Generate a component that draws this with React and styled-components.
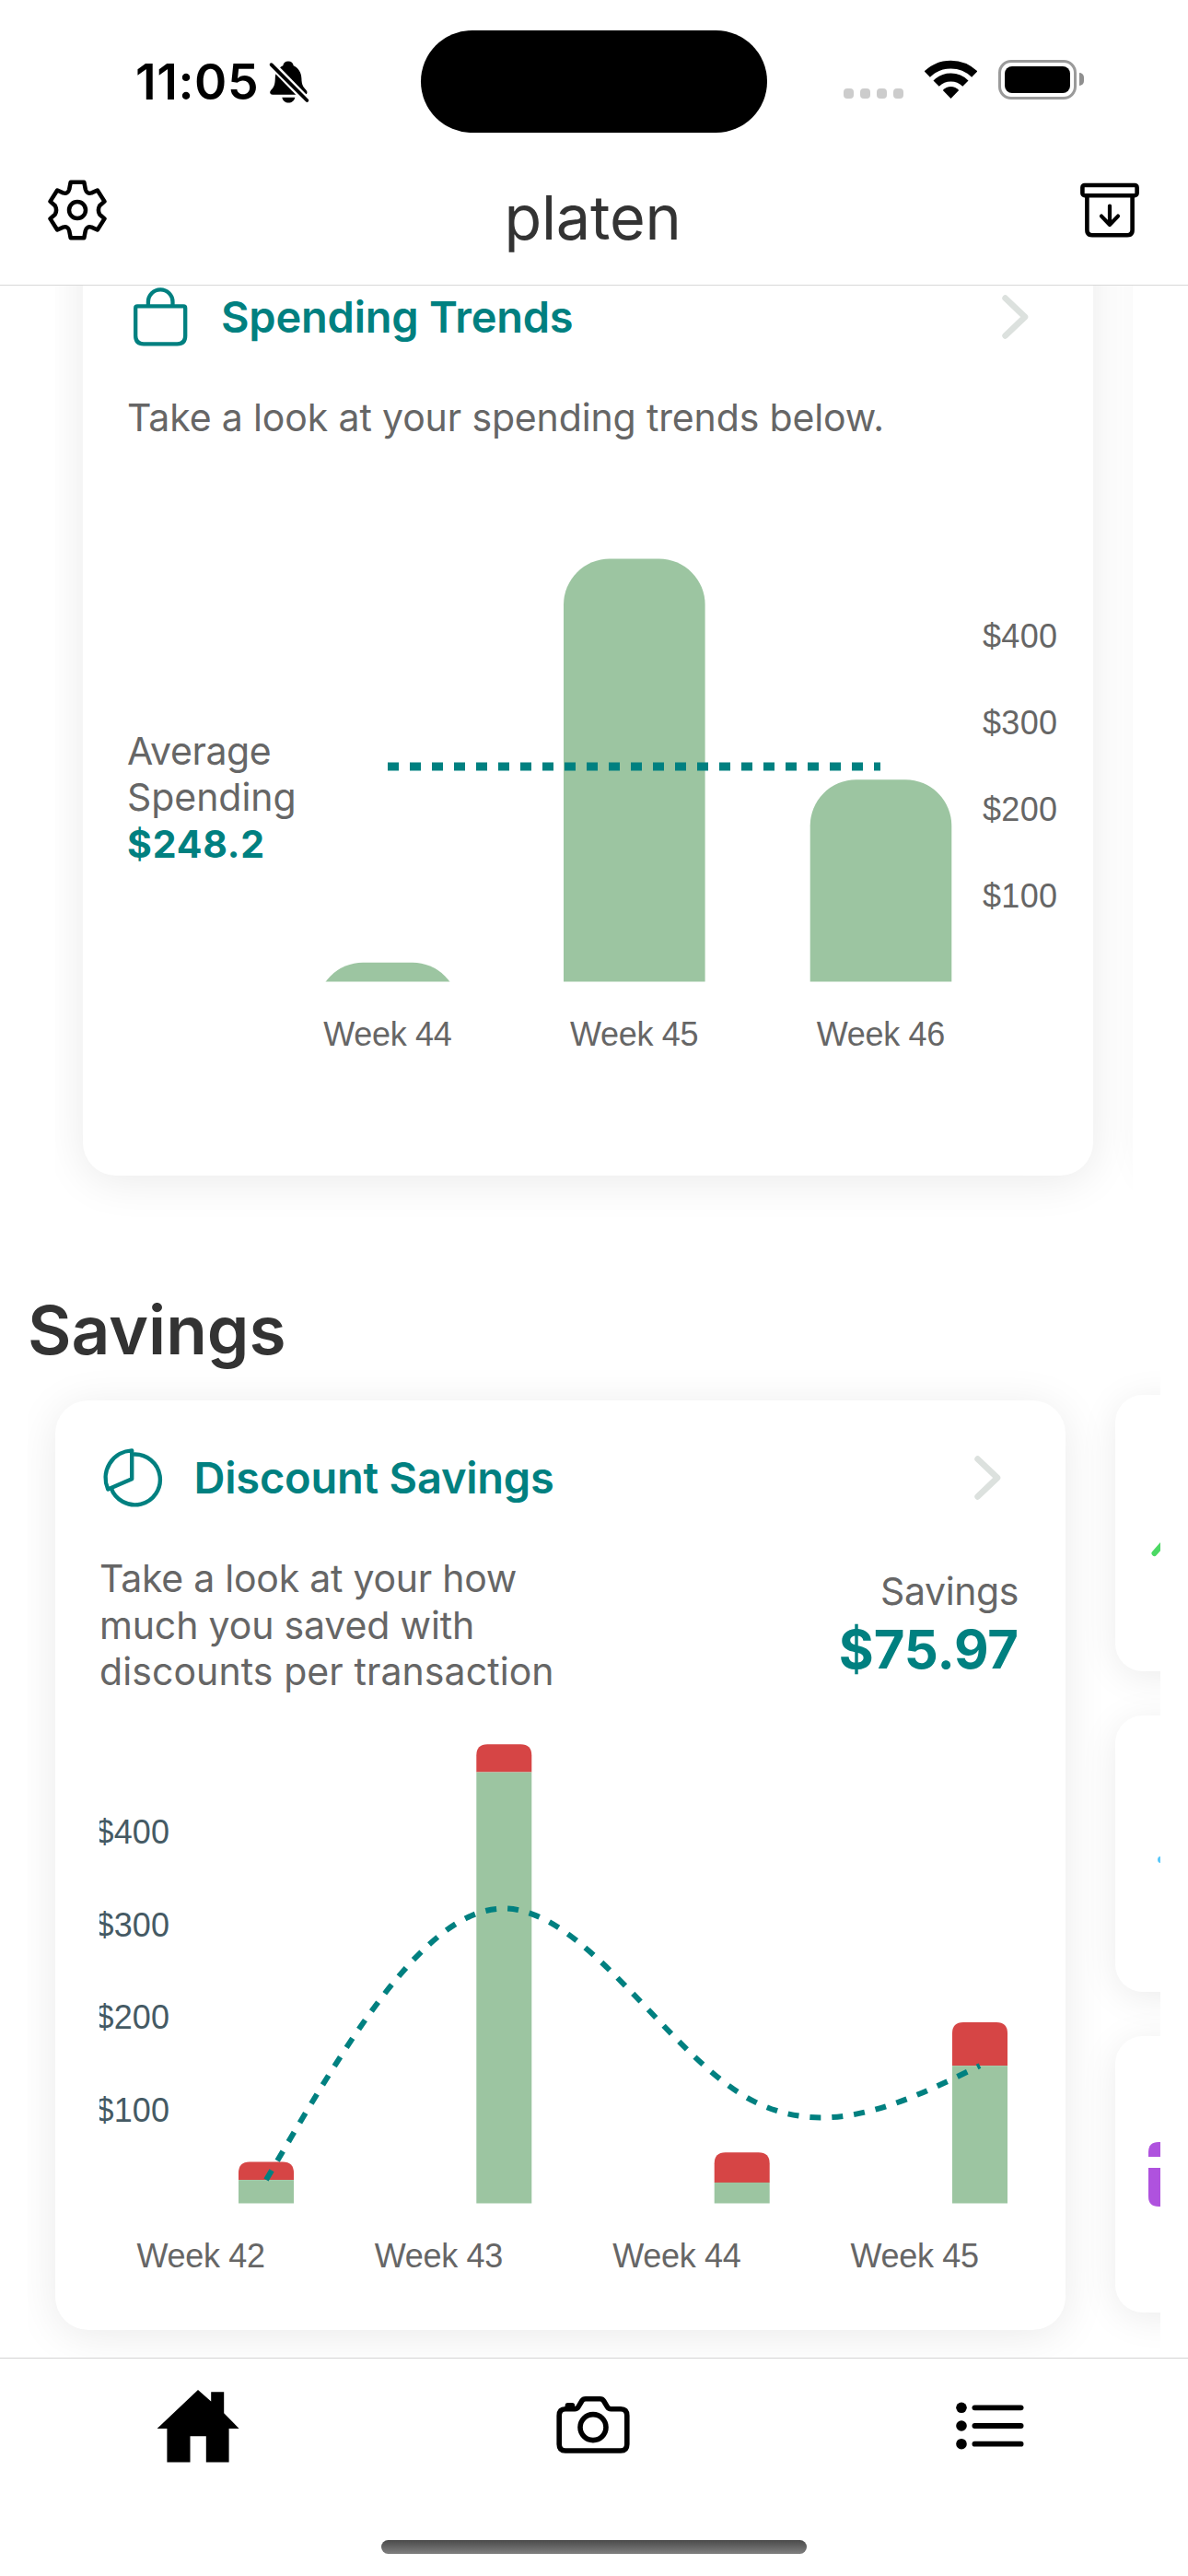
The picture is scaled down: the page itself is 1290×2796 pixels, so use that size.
import React from "react";
import styled, { createGlobalStyle } from "styled-components";

const TEAL = "#008080";
const GREEN = "#9cc5a1";
const RED = "#d64545";
const GREY = "#666666";

const GlobalStyle = createGlobalStyle`
  * { box-sizing: border-box; }
  body { margin: 0; background: #ffffff; }
  svg { display: block; flex: none; }
`;

const Screen = styled.div`
  width: 1290px;
  height: 2796px;
  display: flex;
  flex-direction: column;
  overflow: hidden;
  background: #ffffff;
  color: ${GREY};
  font-family: Inter, Roboto, "Liberation Sans", sans-serif;
`;

/* ---------- Status bar ---------- */

const StatusBar = styled.div`
  display: grid;
  grid-template-columns: 457px 376px 1fr;
  height: 177px;
  padding-top: 33px;
  flex: none;
`;

const StatusLeft = styled.div`
  display: flex;
  align-items: center;
  height: 111px;
  padding-left: 147px;
`;

const Clock = styled.span`
  width: 143px;
  font-size: 53.5px;
  font-weight: 600;
  letter-spacing: 0.6px;
  line-height: 64px;
  color: #000000;
`;

const Island = styled.div`
  height: 111px;
  border-radius: 56px;
  background: #000000;
`;

const StatusRight = styled.div`
  display: flex;
  align-items: flex-start;
  padding: 32px 0 0 83px;
`;

const SignalDots = styled.div`
  display: flex;
  gap: 7px;
  margin: 31px 23px 0 0;
`;

const Dot = styled.i`
  width: 11px;
  height: 11px;
  border-radius: 4px;
  background: #cccccc;
`;

const BatteryShell = styled.div`
  width: 85px;
  height: 43px;
  margin-left: 23px;
  padding: 4px;
  border: 3px solid #9a9a9a;
  border-radius: 14px;
`;

const BatteryFill = styled.div`
  height: 100%;
  border-radius: 8px;
  background: #000000;
`;

const BatteryNub = styled.div`
  width: 5px;
  height: 14px;
  margin: 14px 0 0 3px;
  border-radius: 0 6px 6px 0;
  background: #8f8f8f;
`;

/* ---------- Header ---------- */

const Header = styled.header`
  display: flex;
  justify-content: space-between;
  align-items: flex-start;
  height: 133px;
  padding: 18px 52px 0 51px;
  border-bottom: 1px solid #d8d8d8;
  flex: none;
`;

const AppName = styled.h1`
  margin: 1px 2px 0 0;
  font-size: 66.5px;
  font-weight: 400;
  letter-spacing: -0.2px;
  line-height: 80px;
  color: #333333;
`;

/* ---------- Scroll content ---------- */

const Content = styled.main`
  flex: 1;
  min-height: 0;
  display: flex;
  flex-direction: column;
  overflow: hidden;
`;

const TrendsCarousel = styled.section`
  flex: none;
  display: flex;
  align-items: flex-start;
  gap: 60px;
  width: 1170px;
  height: 1094px;
  margin-left: 60px;
  padding-left: 30px;
  overflow: hidden;
`;

const SavingsCarousel = styled.section`
  flex: none;
  display: flex;
  align-items: flex-start;
  gap: 54px;
  width: 1230px;
  height: 1120px;
  margin-left: 30px;
  padding: 36px 0 0 30px;
  overflow: hidden;
`;

const SectionTitle = styled.h2`
  flex: none;
  margin: 0;
  padding-left: 30px;
  font-size: 73px;
  font-weight: 600;
  letter-spacing: 0;
  line-height: 80px;
  color: #333333;
`;

const Card = styled.article`
  flex: none;
  width: 1097px;
  height: ${(p) => p.$height}px;
  margin-top: ${(p) => p.$offset || 0}px;
  padding: ${(p) => p.$top}px 0 0 48px;
  border-radius: 36px;
  background: #ffffff;
  box-shadow: 0 6px 48px rgba(0, 0, 0, 0.085);
`;

const CardHeader = styled.div`
  display: flex;
  align-items: center;
  height: 68px;
  padding: 0 70px 0 ${(p) => p.$inset}px;
  gap: ${(p) => p.$gap}px;
`;

const CardTitle = styled.h3`
  flex: 1;
  margin: 0;
  font-size: 47px;
  font-weight: 600;
  letter-spacing: -0.22px;
  line-height: 60px;
  color: ${TEAL};
`;

const Line = styled.div`
  font-size: 41px;
  line-height: 50.5px;
  letter-spacing: ${(p) => p.$track || 0}px;
  white-space: nowrap;
  color: ${GREY};
`;

const Description = styled.div`
  margin-top: 50px;
`;

const SummaryRow = styled.div`
  display: flex;
  justify-content: space-between;
  padding-right: 51px;
`;

const Stat = styled.div`
  margin-top: 64px;
  text-align: right;
`;

const StatValue = styled.div`
  margin-top: 1px;
  font-size: 58px;
  font-weight: 700;
  letter-spacing: -0.1px;
  line-height: 72px;
  color: ${TEAL};
`;

const ChartRow = styled.div`
  display: flex;
`;

const Average = styled.div`
  width: 202px;
  padding-top: 311px;
`;

const AverageValue = styled(Line)`
  font-weight: 700;
  color: ${TEAL};
`;

const AxisText = styled.text`
  font-family: "Liberation Sans", Arial, sans-serif;
  font-size: 36px;
  fill: ${(p) => p.$color || GREY};
`;

const TileColumn = styled.div`
  flex: none;
  display: flex;
  flex-direction: column;
  gap: 48px;
  margin-top: -6px;
`;

const Tile = styled.div`
  display: flex;
  align-items: center;
  width: 600px;
  height: 300px;
  padding-left: 36px;
  border-radius: 30px;
  background: #ffffff;
  box-shadow: 0 6px 40px rgba(0, 0, 0, 0.08);
`;

/* ---------- Tab bar ---------- */

const TabBar = styled.nav`
  flex: none;
  height: 237px;
  border-top: 1px solid #d4d4d4;
  background: #ffffff;
`;

const Tabs = styled.div`
  display: grid;
  grid-template-columns: repeat(3, 1fr);
  place-items: center;
  height: 146px;
`;

const HomeIndicator = styled.div`
  width: 462px;
  height: 15px;
  margin: 51px auto 0;
  border-radius: 8px;
  background: linear-gradient(#4a4a4a, #808080);
`;

/* ---------- Icons ---------- */

const BellOffIcon = () => (
  <svg width="48" height="52" viewBox="0 0 48 52">
    <path d="M23 3.5C19.8 3.5 17.7 5.5 17.3 8.3C12 11 9 15.5 8.8 22C8.6 29 7.5 31.5 4.5 34.6C2.3 37 3 39.7 6 39.7H40.5C43.8 39.7 44.4 36.8 42.2 34.4C39 31.2 37.6 29 37.4 22C37.2 15.5 34 11 28.7 8.3C28.3 5.5 26.2 3.5 23 3.5Z" />
    <path d="M16.3 42.8H30.3C29.6 46.5 26.6 48.6 23.3 48.6S17 46.5 16.3 42.8Z" />
    <path d="M1 2.8L47 50" stroke="#fff" strokeWidth="8.4" />
    <path d="M4.6 7.2L43.4 46" stroke="#000" strokeWidth="3.8" strokeLinecap="round" />
  </svg>
);

const WifiIcon = () => (
  <svg width="57" height="43" viewBox="0 0 57 43" fill="none" stroke="#000">
    <path d="M2.8 15.5A36.8 36.8 0 0 1 54.2 15.5" strokeWidth="8.8" />
    <path d="M12.6 25.6A22.4 22.4 0 0 1 44.4 25.6" strokeWidth="8.8" />
    <path d="M28.5 42L19.8 33C24.4 27.8 32.6 27.8 37.2 33Z" fill="#000" stroke="none" />
  </svg>
);

const GearIcon = () => (
  <svg width="66" height="66" viewBox="-33 -33 66 66" fill="none" stroke="#000" strokeWidth="4.5" strokeLinejoin="round">
    <path d="M-7.3 -30.2H7.3L8.8 -22.5Q10.2 -17.2 15.4 -18.6L21.8 -21.5L29.5 -9.4L24.2 -4.8Q21.6 0 24.2 4.8L29.5 9.4L21.8 21.5L15.4 18.6Q10.2 17.2 8.8 22.5L7.3 30.2H-7.3L-8.8 22.5Q-10.2 17.2 -15.4 18.6L-21.8 21.5L-29.5 9.4L-24.2 4.8Q-21.6 0 -24.2 -4.8L-29.5 -9.4L-21.8 -21.5L-15.4 -18.6Q-10.2 -17.2 -8.8 -22.5Z" />
    <circle r="9" />
  </svg>
);

const ArchiveIcon = () => (
  <svg width="66" height="66" viewBox="1172 195 66 66" fill="none" stroke="#000" strokeWidth="4.6" strokeLinecap="round" strokeLinejoin="round">
    <rect x="1175.4" y="201" width="59.2" height="11.2" rx="2.4" />
    <path d="M1180.4 213V249.5Q1180.4 255.2 1186 255.2H1224Q1229.6 255.2 1229.6 249.5V213" />
    <path d="M1205 223.5V243.5M1196 234.6L1205 244L1214 234.6" strokeWidth="4.2" />
  </svg>
);

const BagIcon = () => (
  <svg width="60" height="66" viewBox="144 311 60 66" fill="none" stroke={TEAL} strokeWidth="4.3">
    <path d="M160.9 332V327.7A13.3 13.3 0 0 1 187.5 327.7V332" />
    <path d="M149.2 332.4H199.2Q201.2 332.4 201.2 334.4V364.5Q201.2 373.3 192.4 373.3H156Q147.2 373.3 147.2 364.5V334.4Q147.2 332.4 149.2 332.4Z" />
  </svg>
);

const PieIcon = () => (
  <svg width="66" height="66" viewBox="112 1571 66 66" fill="none" stroke={TEAL} strokeWidth="4.4">
    <path d="M146 1578.6A27.4 27.4 0 1 1 121.6 1615" />
    <path d="M144.2 1574.4V1605.2L118.2 1616.4A29.9 29.9 0 0 1 144.2 1574.4Z" strokeLinejoin="round" />
  </svg>
);

const Chevron = () => (
  <svg width="29" height="48" viewBox="0 0 29 48" fill="none" stroke="#dce1de" strokeWidth="6.6" strokeLinecap="round" strokeLinejoin="round">
    <path d="M3.6 3.6L25 24L3.6 44.4" />
  </svg>
);

const TrendTileIcon = () => (
  <svg width="80" height="60" viewBox="0 0 80 60" fill="none" stroke="#4cd964" strokeWidth="6" strokeLinecap="round" strokeLinejoin="round">
    <path d="M6.5 52L24 32L40 44L70 12" />
  </svg>
);

const WaveTileIcon = () => (
  <svg width="80" height="60" viewBox="0 0 80 60" fill="#5ac8fa">
    <rect x="10" y="33" width="40" height="7" rx="3.5" />
  </svg>
);

const CardTileIcon = () => (
  <svg width="90" height="70" viewBox="0 0 90 70" fill="#af52de">
    <path d="M0 16V11Q0 0 11 0H79Q90 0 90 11V16Z" />
    <path d="M0 28H90V59Q90 70 79 70H11Q0 70 0 59Z" />
  </svg>
);

const HomeIcon = () => (
  <svg width="90" height="80" viewBox="170 2593 90 80">
    <path d="M215 2594L229.2 2606.6V2596.3H243.2V2619.2L259.6 2636H248.6V2672.4H223.8V2644.2H206.5V2672.4H181.4V2636H170.6Z" />
  </svg>
);

const CameraIcon = () => (
  <svg width="90" height="66" viewBox="600 2600 90 66" fill="none" stroke="#000" strokeWidth="5.6" strokeLinejoin="round">
    <path d="M607.2 2622Q607.2 2614.8 614 2614.8H624Q626.6 2614.8 628 2612.4L631.8 2606Q633.2 2603.8 636 2603.8H651.5Q654.2 2603.8 655.6 2606L659.4 2612.4Q660.8 2614.8 663.6 2614.8H674Q680.8 2614.8 680.8 2622V2653Q680.8 2660 674 2660H614Q607.2 2660 607.2 2653Z" />
    <rect x="613.6" y="2608" width="10.6" height="6.4" rx="3" fill="#000" stroke="none" />
    <circle cx="644" cy="2634.6" r="14" />
  </svg>
);

const ListIcon = () => (
  <svg width="80" height="60" viewBox="1035 2603 80 60">
    {[2613.3, 2633, 2652.7].map((y) => (
      <g key={y}>
        <circle cx="1044" cy={y} r="5.8" />
        <path d={`M1058.4 ${y}H1108.6`} stroke="#000" strokeWidth="5.8" strokeLinecap="round" />
      </g>
    ))}
  </svg>
);

/* ---------- Charts ---------- */

const spending = [
  { label: "Week 44", x: 421, top: 1044.3 },
  { label: "Week 45", x: 688.8, top: 606 },
  { label: "Week 46", x: 956.5, top: 845.8 },
];

const SpendingChart = () => (
  <svg width="847" height="760" viewBox="340 478.5 847 760">
    <defs>
      <clipPath id="plot">
        <rect x="340" y="478" width="720" height="587" />
      </clipPath>
    </defs>
    <g clipPath="url(#plot)" fill={GREEN}>
      {spending.map((b) => (
        <rect key={b.label} x={b.x - 76.8} y={b.top} width="153.6" height="640" rx="50" />
      ))}
    </g>
    <path d="M421 831.5H956" stroke={TEAL} strokeWidth="9" strokeDasharray="12 12" />
    {spending.map((b) => (
      <AxisText key={b.label} x={b.x} y="1134.5" textAnchor="middle" textLength="139.5">{b.label}</AxisText>
    ))}
    {["$400", "$300", "$200", "$100"].map((t, i) => (
      <AxisText key={t} x="1067" y={702 + i * 94} textLength="81">{t}</AxisText>
    ))}
  </svg>
);

const savings = [
  { label: "Week 42", x: 289, top: 2346, split: 2365.6 },
  { label: "Week 43", x: 547.3, top: 1892.8, split: 1923 },
  { label: "Week 44", x: 805.7, top: 2335.8, split: 2368.4 },
  { label: "Week 45", x: 1064, top: 2194.6, split: 2241.6 },
];

/* Uniform cubic B-spline through the first and last samples. */
const basisCurve = (pts) => {
  const mix = (a, b, t) => [a[0] + (b[0] - a[0]) * t, a[1] + (b[1] - a[1]) * t];
  const last = pts.length - 1;
  const knot = (i) => mix(mix(pts[i - 1], pts[i], 2 / 3), mix(pts[i], pts[i + 1], 1 / 3), 0.5);
  let d = `M${pts[0]}`;
  for (let i = 0; i < last; i += 1) {
    const end = i + 1 === last ? pts[last] : knot(i + 1);
    d += `C${mix(pts[i], pts[i + 1], 1 / 3)} ${mix(pts[i], pts[i + 1], 2 / 3)} ${end}`;
  }
  return d;
};

const SavingsChart = () => (
  <svg width="1049" height="680" viewBox="108 1839.5 1049 680">
    {savings.map((b) => (
      <g key={b.label}>
        <path
          d={`M${b.x - 30} ${b.split}V${b.top + 12}Q${b.x - 30} ${b.top} ${b.x - 18} ${b.top}H${b.x + 18}Q${b.x + 30} ${b.top} ${b.x + 30} ${b.top + 12}V${b.split}Z`}
          fill={RED}
        />
        <rect x={b.x - 30} y={b.split} width="60" height={2391 - b.split} fill={GREEN} />
        <AxisText x={b.x - 70.7} y="2460.5" textAnchor="middle" textLength="139.5">{b.label}</AxisText>
      </g>
    ))}
    <path
      d={basisCurve(savings.map((b) => [b.x, b.split]))}
      fill="none"
      stroke={TEAL}
      strokeWidth="6"
      strokeDasharray="12 12"
    />
    {["$400", "$300", "$200", "$100"].map((t, i) => (
      <AxisText key={t} $color="#455a64" x="103.5" y={2000.5 + i * 100.7} textLength="80.5">{t}</AxisText>
    ))}
  </svg>
);

export default function App() {
  return (
    <Screen>
      <GlobalStyle />
      <StatusBar>
        <StatusLeft>
          <Clock>11:05</Clock>
          <BellOffIcon />
        </StatusLeft>
        <Island />
        <StatusRight>
          <SignalDots>
            <Dot /><Dot /><Dot /><Dot />
          </SignalDots>
          <WifiIcon />
          <BatteryShell>
            <BatteryFill />
          </BatteryShell>
          <BatteryNub />
        </StatusRight>
      </StatusBar>
      <Header>
        <GearIcon />
        <AppName>platen</AppName>
        <ArchiveIcon />
      </Header>
      <Content>
        <TrendsCarousel>
          <Card $height={1056} $offset={-90} $top={90}>
            <CardHeader $inset={6} $gap={36}>
              <BagIcon />
              <CardTitle>Spending Trends</CardTitle>
              <Chevron />
            </CardHeader>
            <Description>
              <Line $track={-0.14}>Take a look at your spending trends below.</Line>
            </Description>
            <ChartRow>
              <Average>
                <Line $track={-0.4}>Average</Line>
                <Line $track={-0.05}>Spending</Line>
                <AverageValue $track={0.8}>$248.2</AverageValue>
              </Average>
              <SpendingChart />
            </ChartRow>
          </Card>
          <Card $height={1056} $offset={-90} $top={90} />
        </TrendsCarousel>
        <SectionTitle>Savings</SectionTitle>
        <SavingsCarousel>
          <Card $height={1009} $top={50}>
            <CardHeader $inset={2.5} $gap={34}>
              <PieIcon />
              <CardTitle>Discount Savings</CardTitle>
              <Chevron />
            </CardHeader>
            <SummaryRow>
              <Description>
                <Line $track={-0.25}>Take a look at your how</Line>
                <Line $track={-0.15}>much you saved with</Line>
                <Line $track={0.08}>discounts per transaction</Line>
              </Description>
              <Stat>
                <Line $track={-0.4}>Savings</Line>
                <StatValue>$75.97</StatValue>
              </Stat>
            </SummaryRow>
            <SavingsChart />
          </Card>
          <TileColumn>
            <Tile><TrendTileIcon /></Tile>
            <Tile><WaveTileIcon /></Tile>
            <Tile><CardTileIcon /></Tile>
          </TileColumn>
        </SavingsCarousel>
      </Content>
      <TabBar>
        <Tabs>
          <HomeIcon />
          <CameraIcon />
          <ListIcon />
        </Tabs>
        <HomeIndicator />
      </TabBar>
    </Screen>
  );
}
